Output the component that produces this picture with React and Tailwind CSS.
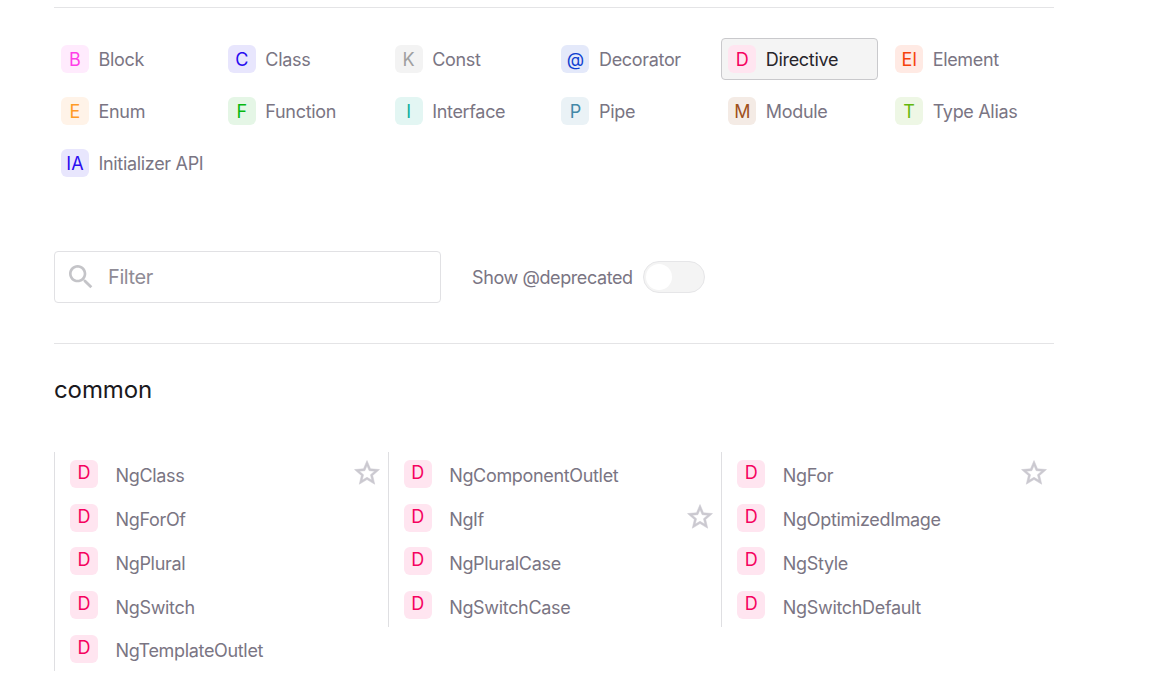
const legend = [
  { label: "Block", letter: "B", box: "bg-[#ffebfd]", text: "text-[#ff3ee8]" },
  { label: "Class", letter: "C", box: "bg-[#e8e6fd]", text: "text-[#2a0cf0]" },
  { label: "Const", letter: "K", box: "bg-[#f3f3f3]", text: "text-[#a0a0a0]" },
  { label: "Decorator", letter: "@", box: "bg-[#e4e9fa]", text: "text-[#0f3fd0]" },
  { label: "Directive", letter: "D", box: "bg-[#ffe5f0]", text: "text-[#f5035f]", active: true },
  { label: "Element", letter: "El", box: "bg-[#ffeae4]", text: "text-[#f5410a]" },
  { label: "Enum", letter: "E", box: "bg-[#fff3e8]", text: "text-[#ff9a26]" },
  { label: "Function", letter: "F", box: "bg-[#e5f6e6]", text: "text-[#06b80f]" },
  { label: "Interface", letter: "I", box: "bg-[#e3f6f3]", text: "text-[#0aaf9b]" },
  { label: "Pipe", letter: "P", box: "bg-[#eaf2f6]", text: "text-[#4388a8]" },
  { label: "Module", letter: "M", box: "bg-[#f4ebe5]", text: "text-[#a0501c]" },
  { label: "Type Alias", letter: "T", box: "bg-[#eef7e5]", text: "text-[#63b80c]" },
  { label: "Initializer API", letter: "IA", box: "bg-[#e8e6fd]", text: "text-[#2a0cf0]" },
];

const columns = [
  [
    { name: "NgClass", star: true },
    { name: "NgForOf" },
    { name: "NgPlural" },
    { name: "NgSwitch" },
    { name: "NgTemplateOutlet" },
  ],
  [
    { name: "NgComponentOutlet" },
    { name: "NgIf", star: true },
    { name: "NgPluralCase" },
    { name: "NgSwitchCase" },
  ],
  [
    { name: "NgFor", star: true },
    { name: "NgOptimizedImage" },
    { name: "NgStyle" },
    { name: "NgSwitchDefault" },
  ],
];

function StarIcon() {
  return (
    <svg viewBox="0 0 24 24" className="w-[30px] h-[30px] fill-[#cbc9d0] stroke-[#cbc9d0] stroke-[0.4] shrink-0 -mt-[2px]">
      <path d="M22 9.24l-7.19-.62L12 2 9.19 8.63 2 9.24l5.46 4.73L5.82 21 12 17.27 18.18 21l-1.63-7.03L22 9.24zM12 15.4l-3.76 2.27 1-4.28-3.32-2.88 4.38-.38L12 6.1l1.71 4.04 4.38.38-3.32 2.88 1 4.28L12 15.4z" />
    </svg>
  );
}

function SearchIcon() {
  return (
    <svg viewBox="0 0 24 24" className="w-[32px] h-[32px] fill-[#c4c4c8] shrink-0">
      <path d="M15.5 14h-.79l-.28-.27C15.41 12.59 16 11.11 16 9.5 16 5.91 13.09 3 9.5 3S3 5.91 3 9.5 5.91 16 9.5 16c1.61 0 3.09-.59 4.23-1.57l.27.28v.79l5 4.99L20.49 19l-4.99-5zm-6 0C7.01 14 5 11.99 5 9.5S7.01 5 9.5 5 14 7.01 14 9.5 11.99 14 9.5 14z" />
    </svg>
  );
}

export default function App() {
  return (
    <div className="h-[695px] overflow-hidden bg-white pl-[54px] pt-[7px] font-['Inter',sans-serif]">
      <div className="w-[1000px]">
        <hr className="border-[#e4e4e6]" />

        <div className="grid grid-cols-6 gap-[10px] w-[991px] mt-[30px]">
          {legend.map((item) => (
            <div
              key={item.label}
              className={`flex items-center gap-[9.5px] h-[42px] pl-[6px] rounded-[4px] border ${
                item.active ? "bg-[#f4f4f4] border-[#c9c9cc]" : "border-transparent"
              }`}
            >
              <span className={`flex items-center justify-center w-[28px] h-[28px] rounded-[6px] text-[18px] ${item.box} ${item.text}`}>
                {item.letter}
              </span>
              <span className={`text-[18px] tracking-[-0.32px] ${item.active ? "text-[#27252b]" : "text-[#7a7583]"}`}>{item.label}</span>
            </div>
          ))}
        </div>

        <div className="flex items-center mt-[67px]">
          <div className="flex items-center w-[387px] h-[52px] pl-[10px] border border-[#e1e1e4] rounded-[4px]">
            <SearchIcon />
            <span className="ml-[11px] text-[20px] tracking-[-0.4px] text-[#8f8c96]">Filter</span>
          </div>
          <span className="ml-[31px] text-[18px] tracking-[-0.4px] text-[#7a7583]">Show @deprecated</span>
          <div className="ml-[10px] flex items-center w-[62px] h-[32px] rounded-full bg-[#f4f4f4] border border-[#e6e6e8]">
            <span className="w-[26px] h-[26px] ml-[2px] rounded-full bg-white" />
          </div>
        </div>

        <hr className="mt-[40px] border-[#e4e4e6]" />

        <h3 className="mt-[30px] text-[24px] leading-[32px] tracking-[-0.1px] text-[#1a191d]">common</h3>

        <div className="grid grid-cols-3 w-[1001px] mt-[46px] items-start">
          {columns.map((col, i) => (
            <ul key={i}>
              {col.map((row) => (
                <li key={row.name} className="flex items-center h-[43.75px] pl-[15px] pr-[6px] border-l border-[#dfdfe2]">
                  <span className="flex items-center justify-center w-[28px] h-[28px] rounded-[6px] text-[18px] leading-none pb-[2px] bg-[#ffe5f0] text-[#f5035f]">
                    D
                  </span>
                  <span className="ml-[17.5px] mt-[4px] text-[18px] tracking-[-0.33px] text-[#7a7583] flex-1">{row.name}</span>
                  {row.star && <StarIcon />}
                </li>
              ))}
            </ul>
          ))}
        </div>
      </div>
    </div>
  );
}
